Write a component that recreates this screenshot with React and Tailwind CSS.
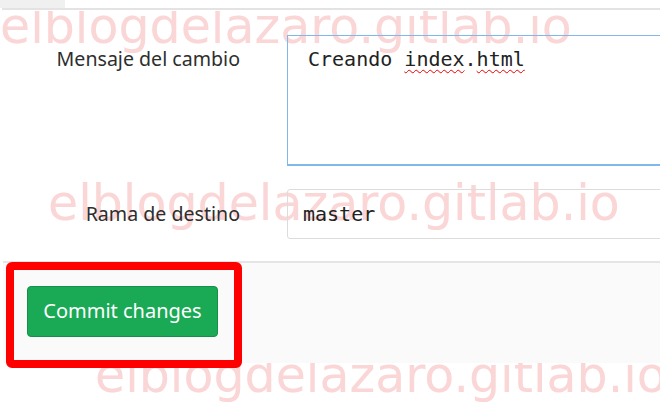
// Formulario de commit de GitLab con marca de agua y recuadro rojo
const WATERMARK = 'elblogdelazaro.gitlab.io';

const Watermark = ({ className }) => (
  <div
    className={`absolute z-0 whitespace-nowrap text-[49px] leading-none text-[#fad6d6] pointer-events-none ${className}`}
    style={{ fontFamily: '"DejaVu Sans", sans-serif' }}
  >
    {WATERMARK}
  </div>
);

export default function App() {
  return (
    <div
      className="relative w-[660px] h-[405px] overflow-hidden bg-white text-[#2e2e2e]"
      style={{ fontFamily: '"Noto Sans", "Open Sans", sans-serif' }}
    >
      <Watermark className="left-[0px] top-[2px]" />
      <Watermark className="left-[48px] top-[179px]" />
      <Watermark className="left-[95px] top-[351px]" />

      <div className="relative z-10">
        {/* Barra superior */}
        <div className="h-[11px] bg-white">
          <div className="w-[65px] h-[8px] bg-[#f0f0f0]" />
          <div className="ml-[2px] h-[2px] bg-[#e3e3e3]" />
        </div>

        {/* Mensaje del cambio */}
        <div className="mt-[24px] grid grid-cols-[240px_1fr] gap-x-[47px]">
          <label className="pt-[11px] text-right text-[19.6px] leading-[26px]">Mensaje del cambio</label>
          <div className="w-[400px] h-[131px] border border-b-2 border-[#80b8ec] pl-[20px] pt-[10px]">
            <div
              className="text-[20px] leading-[26px] text-[#222]"
              style={{ fontFamily: '"DejaVu Sans Mono", monospace' }}
            >
              Creando{' '}
              <span className="underline decoration-wavy decoration-[#e00] decoration-1 underline-offset-[3px]">index</span>
              .
              <span className="underline decoration-wavy decoration-[#e00] decoration-1 underline-offset-[3px]">html</span>
            </div>
          </div>
        </div>

        {/* Rama de destino */}
        <div className="mt-[23px] grid grid-cols-[240px_1fr] gap-x-[47px] items-center">
          <label className="text-right text-[19.6px] leading-[26px]">Rama de destino</label>
          <div className="w-[400px] h-[50px] flex items-center border border-[#dcdcdc] rounded-[3px] pl-[15px]">
            <span
              className="text-[20px] text-[#222]"
              style={{ fontFamily: '"DejaVu Sans Mono", monospace' }}
            >
              master
            </span>
          </div>
        </div>

        {/* Pie del formulario */}
        <div className="relative mt-[22px] ml-[3px] h-[102px] border-t-2 border-[#e5e5e5] bg-[#fafafa] pl-[24px] pt-[23px]">
          <button className="w-[191px] h-[51px] pb-[1px] rounded-[4px] border border-[#168f48] bg-[#1aaa55] text-[20px] text-white">
            Commit changes
          </button>
          <div className="absolute left-[3px] top-[-1px] w-[236px] h-[106px] rounded-[6px] border-[8px] border-[#ff0000] pointer-events-none" />
        </div>
      </div>
    </div>
  );
}
